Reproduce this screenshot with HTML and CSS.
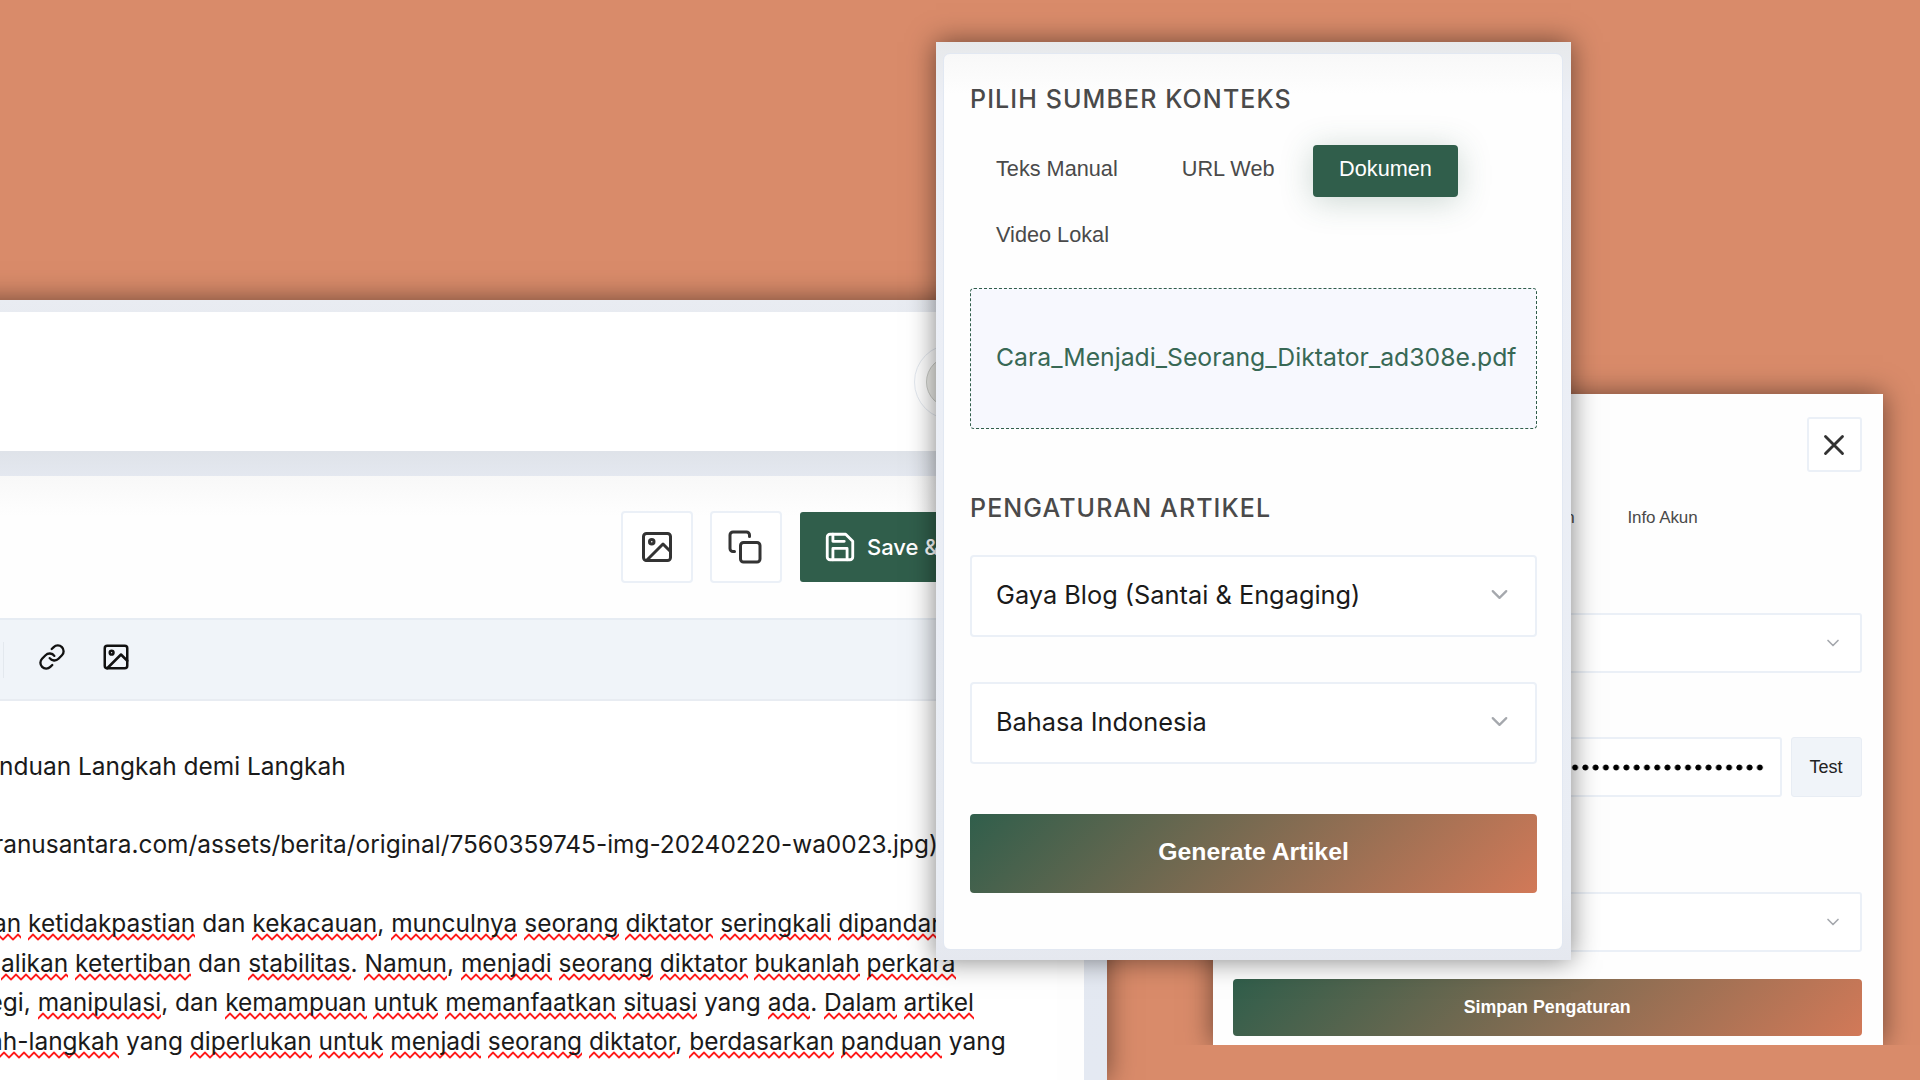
FILE: index.html
```html
<!DOCTYPE html>
<html lang="id">
<head>
    <meta charset="UTF-8">
    <title>Generator Artikel</title>
    <meta name="viewport" content="width=device-width, initial-scale=1.0">
    <link rel="stylesheet" href="styles.css">
</head>
<body>
    <!-- shared icons -->
    <svg class="icon-defs" width="0" height="0">
        <symbol id="icon-image" viewBox="0 0 24 24">
            <rect x="3" y="3" width="18" height="18" rx="2"/>
            <circle cx="8.5" cy="8.5" r="1.5"/>
            <path d="M21 15l-5-5L5 21"/>
        </symbol>
        <symbol id="icon-chevron" viewBox="0 0 24 24">
            <path d="M6 9l6 6 6-6"/>
        </symbol>
    </svg>

    <!-- editor -->
    <section class="window editor-window">
        <header class="topbar">
            <div class="avatar"><span></span></div>
        </header>
        <main class="editor-card">
            <div class="actions">
                <button class="icon-btn"><svg class="icon icon-36"><use href="#icon-image"/></svg></button>
                <button class="icon-btn">
                    <svg class="icon icon-36" viewBox="0 0 24 24">
                        <rect x="9" y="9" width="13" height="13" rx="2"/>
                        <path d="M5 15H4a2 2 0 0 1-2-2V4a2 2 0 0 1 2-2h9a2 2 0 0 1 2 2v1"/>
                    </svg>
                </button>
                <button class="save-btn">
                    <svg class="icon icon-34" viewBox="0 0 24 24">
                        <path d="M19 21H5a2 2 0 0 1-2-2V5a2 2 0 0 1 2-2h11l5 5v11a2 2 0 0 1-2 2z"/>
                        <path d="M17 21v-8H7v8M7 3v5h8"/>
                    </svg>
                    <span>Save &amp; Export</span>
                </button>
            </div>
            <div class="toolbar">
                <i class="divider"></i>
                <svg class="icon icon-28" viewBox="0 0 24 24">
                    <path d="M10 13a5 5 0 0 0 7.54.54l3-3a5 5 0 0 0-7.07-7.07l-1.72 1.71"/>
                    <path d="M14 11a5 5 0 0 0-7.54-.54l-3 3a5 5 0 0 0 7.07 7.07l1.71-1.71"/>
                </svg>
                <svg class="icon icon-30"><use href="#icon-image"/></svg>
            </div>
            <div class="content">
                <p class="title-line">nduan Langkah demi Langkah</p>
                <p class="url-line">ranusantara.com/assets/berita/original/7560359745-img-20240220-wa0023.jpg)</p>
                <p class="l1"><u>an</u> <u>ketidakpastian</u> dan <u>kekacauan</u>, <u>munculnya</u> <u>seorang</u> <u>diktator</u> <u>seringkali</u> <u>dipandang</u></p>
                <p class="l2"><u>alikan</u> <u>ketertiban</u> dan <u>stabilitas</u>. <u>Namun</u>, <u>menjadi</u> <u>seorang</u> <u>diktator</u> <u>bukanlah</u> <u>perkara</u></p>
                <p class="l3">egi, <u>manipulasi</u>, dan <u>kemampuan</u> <u>untuk</u> <u>memanfaatkan</u> <u>situasi</u> yang <u>ada</u>. <u>Dalam</u> <u>artikel</u></p>
                <p class="l4"><u>ah-langkah</u> yang <u>diperlukan</u> <u>untuk</u> <u>menjadi</u> <u>seorang</u> <u>diktator</u>, <u>berdasarkan</u> <u>panduan</u> yang</p>
            </div>
        </main>
    </section>

    <!-- settings -->
    <section class="window settings-window">
        <button class="close-btn">
            <svg class="icon icon-34" viewBox="0 0 24 24"><path d="M18 6L6 18M6 6l12 12"/></svg>
        </button>
        <nav class="settings-tabs">
            <span>Pengaturan</span>
            <span>Info Akun</span>
        </nav>
        <div class="field"><svg class="icon chevron"><use href="#icon-chevron"/></svg></div>
        <div class="key-row">
            <div class="field key-field"><i class="dots"></i></div>
            <button class="test-btn">Test</button>
        </div>
        <div class="field"><svg class="icon chevron"><use href="#icon-chevron"/></svg></div>
        <button class="gradient-btn simpan-btn">Simpan Pengaturan</button>
    </section>

    <!-- source panel -->
    <section class="window source-window">
        <div class="source-card">
            <h2>PILIH SUMBER KONTEKS</h2>
            <div class="tabs">
                <button class="tab">Teks Manual</button>
                <button class="tab">URL Web</button>
                <button class="tab active">Dokumen</button>
                <button class="tab">Video Lokal</button>
            </div>
            <div class="dropzone">Cara_Menjadi_Seorang_Diktator_ad308e.pdf</div>
            <h2 class="second">PENGATURAN ARTIKEL</h2>
            <div class="select"><span>Gaya Blog (Santai &amp; Engaging)</span><svg class="icon chevron"><use href="#icon-chevron"/></svg></div>
            <div class="select"><span>Bahasa Indonesia</span><svg class="icon chevron"><use href="#icon-chevron"/></svg></div>
            <button class="gradient-btn generate-btn">Generate Artikel</button>
        </div>
    </section>
</body>
</html>
```
FILE: styles.css
```css
:root {
    --bg: #d98b6a;
    --green: #305e4b;
    --orange: #d27958;
    --border: #ebf0f7;
    --soft: #f0f4f9;
    --text: #1a1a1a;
    --muted: #4a4a4a;
}

* {
    box-sizing: border-box;
}

body {
    margin: 0;
    height: 1080px;
    position: relative;
    overflow: hidden;
    background: var(--bg);
    color: var(--text);
    font-family: Inter, sans-serif;
}

h2, p {
    margin: 0;
}

button {
    border: none;
    padding: 0;
    font-family: "Liberation Sans", sans-serif;
}

.icon-defs {
    display: block;
}

.icon {
    fill: none;
    stroke: currentColor;
    stroke-width: 2;
    stroke-linecap: round;
    stroke-linejoin: round;
    flex: none;
}

.icon-28 { width: 28px; height: 28px; }
.icon-30 { width: 30px; height: 30px; }
.icon-34 { width: 34px; height: 34px; }
.icon-36 { width: 36px; height: 36px; }

.window {
    position: absolute;
    box-shadow: 0 0 26px rgba(0, 0, 0, 0.5);
}

/* editor window */
.editor-window {
    left: -60px;
    top: 299.5px;
    width: 1167px;
    height: 780.5px;
    padding: 12.5px 0 0 60px;
    background: linear-gradient(#e9ecf2, #dfe3e9 152px, #e4e8f0 177px, #e4e9f2);
}

.topbar {
    height: 139px;
    background: #fff;
    display: flex;
    align-items: center;
    padding-left: 914px;
}

.avatar {
    width: 76px;
    height: 76px;
    padding: 11px;
    border: 1px solid #e4e9f0;
    border-radius: 50%;
}

.avatar span {
    display: block;
    height: 100%;
    border: 1px solid #c9cbc6;
    border-radius: 50%;
    background: #ecece8;
}

.editor-card {
    width: 1084px;
    height: 604px;
    margin-top: 25px;
    background: linear-gradient(#f8f8f8, #fefefe 40px);
}

.actions {
    height: 142px;
    display: flex;
    align-items: center;
    gap: 16.5px;
    padding-left: 621px;
}

.icon-btn {
    width: 72px;
    height: 72px;
    padding-right: 1px;
    display: flex;
    align-items: center;
    justify-content: center;
    background: #fff;
    border: 2px solid var(--border);
    border-radius: 4px;
    color: #333;
}

.save-btn {
    width: 220px;
    height: 70px;
    margin-left: 2px;
    padding-left: 23px;
    display: flex;
    align-items: center;
    gap: 10px;
    white-space: nowrap;
    background: var(--green);
    color: #fff;
    border-radius: 3px;
    font: 500 22px Inter, sans-serif;
}

.toolbar {
    height: 83px;
    display: flex;
    align-items: center;
    padding: 0 0 5px 3px;
    background: var(--soft);
    border-top: 2px solid #e6ecf3;
    border-bottom: 2px solid #e8ecf2;
    color: #111;
}

.divider {
    width: 1px;
    height: 36px;
    margin: 5px 34px 0 0;
    background: #e3e8ee;
}

.toolbar .icon-30 {
    margin-left: 35px;
}

.content {
    width: 1057px;
    height: 379px;
    padding-top: 46px;
    background: #fff;
    font-size: 24.47px;
    line-height: 39.2px;
    white-space: nowrap;
}

.title-line {
    margin-bottom: 38.5px;
}

.url-line {
    margin-bottom: 40.5px;
    font-size: 24.42px;
}

.title-line { margin-left: -1px; }
.url-line { margin-left: -6px; }
.l1 { margin-left: -7px; }
.l2 { margin-left: 1px; }
.l3 { margin-left: -11.5px; }
.l4 { margin-left: -11px; }

/* spellcheck squiggle */
.content u {
    text-decoration: none;
    padding-bottom: 3px;
    background: url("data:image/svg+xml,%3Csvg xmlns='http://www.w3.org/2000/svg' width='10' height='8' viewBox='0 0 10 8'%3E%3Cpath d='M-1.2 5.3 L0 6.5 L5 1.5 L10 6.5 L11.2 5.3' fill='none' stroke='%23ff1a1a' stroke-width='1.8' stroke-linejoin='round'/%3E%3C/svg%3E") left bottom / 10px 8px repeat-x;
}

/* settings window */
.settings-window {
    left: 1213px;
    top: 394px;
    width: 670px;
    height: 651px;
    padding: 23px 21.5px 0 20px;
    background: #fefefe;
    clip-path: inset(-50px -50px 0 -50px);
    display: flex;
    flex-direction: column;
    font-family: "Liberation Sans", sans-serif;
}

.close-btn {
    width: 55px;
    height: 55px;
    flex: none;
    align-self: flex-end;
    display: flex;
    align-items: center;
    justify-content: center;
    background: #fff;
    border: 2px solid var(--border);
    border-radius: 3px;
    color: #333;
}

.settings-tabs {
    height: 141px;
    padding: 36px 164px 0 0;
    display: flex;
    justify-content: flex-end;
    gap: 53px;
    font-size: 17px;
    letter-spacing: -0.1px;
    line-height: 20px;
    color: var(--muted);
}

.field {
    height: 60px;
    flex: none;
    display: flex;
    align-items: center;
    justify-content: flex-end;
    padding-right: 16.5px;
    background: #fff;
    border: 2px solid var(--border);
    border-radius: 3px;
}

.chevron {
    color: #a5a8ad;
}

.field .chevron {
    width: 20px;
    height: 20px;
}

.key-row {
    display: flex;
    gap: 9px;
    margin: 64px 0 95px;
}

.key-field {
    flex: 1;
    padding-right: 15px;
}

.dots {
    width: 300px;
    height: 7px;
    background: radial-gradient(circle, #000 2.6px, transparent 3.3px) right center / 10.27px 7px repeat-x;
}

.test-btn {
    width: 71px;
    background: var(--soft);
    border: 1px solid #e8edf4;
    border-radius: 3px;
    font-size: 18px;
    color: #222;
}

.gradient-btn {
    color: #fff;
    font-weight: bold;
    background: linear-gradient(135deg, var(--green), var(--orange));
    border-radius: 4px;
}

.simpan-btn {
    height: 57px;
    margin-top: 27px;
    font-size: 17.8px;
}

/* source window */
.source-window {
    left: 936px;
    top: 41.5px;
    width: 635px;
    height: 918.5px;
    padding: 11px 8px 10px 7px;
    background: linear-gradient(#e7e9eb, #eceff6 60px, #e9edf4 850px, #e5e8ef);
}

.source-card {
    height: 897px;
    padding: 30.5px 25px 0 26px;
    background: linear-gradient(#f8f8f8, #fefefe 40px);
    border: 1px solid #e2e8f2;
    border-radius: 7px;
}

h2 {
    font-size: 25px;
    line-height: 30px;
    font-weight: 500;
    letter-spacing: 1.1px;
    color: var(--muted);
}

.tabs {
    display: flex;
    flex-wrap: wrap;
    gap: 14px 12px;
    margin-top: 30.5px;
}

.tab {
    height: 52px;
    padding: 0 26px 3px;
    background: none;
    border-radius: 4px;
    font-size: 21.7px;
    color: var(--muted);
}

.tab.active {
    padding: 0 26.5px 3px;
    background: var(--green);
    color: #fff;
    box-shadow: 0 4px 32px rgba(48, 94, 75, 0.25);
}

.dropzone {
    height: 141px;
    margin-top: 25px;
    padding: 0 0 2px 25px;
    display: flex;
    align-items: center;
    background: #f7f8fe;
    border: 1px dashed #305e4b;
    border-radius: 4px;
    color: #386855;
    font-size: 24.75px;
    white-space: nowrap;
}

.second {
    margin: 64.5px 0 31.5px;
}

.select {
    height: 82px;
    margin-bottom: 45px;
    padding: 0 22px 2px 24px;
    display: flex;
    align-items: center;
    justify-content: space-between;
    background: #fff;
    border: 2px solid var(--border);
    border-radius: 4px;
    font-size: 25.35px;
}

.select .chevron {
    width: 27px;
    height: 27px;
}

.generate-btn {
    width: 100%;
    height: 79px;
    padding-bottom: 2px;
    margin-top: 5px;
    font-size: 24.8px;
}
```
